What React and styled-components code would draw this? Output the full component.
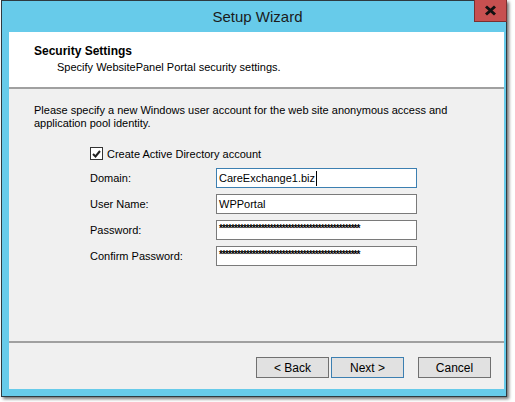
import React from "react";
import styled, { createGlobalStyle } from "styled-components";

const GlobalStyle = createGlobalStyle`
  html, body {
    margin: 0;
    padding: 0;
    background: #ffffff;
    font-family: "Liberation Sans", Arial, sans-serif;
  }
`;

const Screen = styled.div`
  width: 515px;
  height: 402px;
  overflow: hidden;
  padding-left: 1px;
  box-sizing: border-box;
`;

const Window = styled.div`
  width: 506px;
  height: 397px;
  box-sizing: border-box;
  border: 1px solid #2e3a40;
  background: #67cbea;
  box-shadow: 2px 2px 3px rgba(0, 0, 0, 0.55);
  display: flex;
  flex-direction: column;
  padding: 0 2px 7px 7px;
`;

const TitleBar = styled.div`
  height: 31px;
  flex-shrink: 0;
  display: flex;
  align-items: center;
  justify-content: center;
  position: relative;
  font-size: 15px;
  color: #1b1b1b;
  padding-left: 2px;
`;

const CloseButton = styled.div`
  position: absolute;
  top: -1px;
  right: -3px;
  width: 33px;
  height: 22px;
  box-sizing: border-box;
  background: #c75050;
  border: 1px solid #7a3030;
  border-top: none;
  display: flex;
  align-items: center;
  justify-content: center;
`;

const Client = styled.div`
  flex: 1;
  display: flex;
  flex-direction: column;
  background: #f0f0f0;
  font-size: 11px;
  color: #000;
`;

const Header = styled.div`
  height: 57px;
  flex-shrink: 0;
  background: #ffffff;
  box-sizing: border-box;
  padding: 12px 0 0 25px;
  border-bottom: 2px solid #a0a0a0;
`;

const HeaderTitle = styled.div`
  font-weight: bold;
  font-size: 12px;
  line-height: 14px;
`;

const HeaderSub = styled.div`
  padding-left: 23px;
  margin-top: 2px;
  font-size: 11px;
  line-height: 14px;
`;

const Body = styled.div`
  flex: 1;
  padding: 15px 20px 0 25px;
  border-bottom: 2px solid #a0a0a0;
`;

const Intro = styled.p`
  margin: 0;
  font-size: 11px;
  line-height: 13px;
`;

const Form = styled.div`
  margin: 17px 0 0 56px;
  display: grid;
  grid-template-columns: 126px 201px;
  row-gap: 6px;
  align-items: center;
`;

const CheckRow = styled.label`
  grid-column: 1 / span 2;
  display: flex;
  align-items: center;
  gap: 4px;
  font-size: 11px;
  height: 13px;
  margin-bottom: 2px;
`;

const CheckBox = styled.span`
  width: 13px;
  height: 13px;
  box-sizing: border-box;
  border: 1px solid #333;
  background: #fff;
  display: flex;
  align-items: center;
  justify-content: center;
`;

const Label = styled.span`
  font-size: 11px;
`;

const Field = styled.div`
  height: 20px;
  box-sizing: border-box;
  border: 1px solid ${({ $focused }) => ($focused ? "#3c7fb1" : "#7a7a7a")};
  background: #fff;
  display: flex;
  align-items: center;
  padding-left: 2px;
  font-size: 11px;
  color: #000;
  overflow: hidden;
  white-space: nowrap;
`;

const Caret = styled.span`
  display: inline-block;
  width: 1px;
  height: 15px;
  background: #000;
  margin-left: 1px;
`;

const Stars = styled.span`
  font-size: 10px;
  font-weight: bold;
  letter-spacing: -0.9px;
  line-height: 1;
  margin-top: -3px;
`;

const Footer = styled.div`
  height: 46px;
  flex-shrink: 0;
  display: flex;
  justify-content: flex-end;
  align-items: flex-start;
  padding: 14px 13px 0 0;
  box-sizing: border-box;
`;

const Button = styled.div`
  width: 73px;
  height: 21px;
  box-sizing: border-box;
  border: 1px solid ${({ $default }) => ($default ? "#3c7fb1" : "#707070")};
  background: #e1e1e1;
  display: flex;
  align-items: center;
  justify-content: center;
  font-size: 12px;
  margin-left: ${({ $gap }) => $gap}px;
`;

const stars = "*".repeat(47);

export default function App() {
  return (
    <>
      <GlobalStyle />
      <Screen>
        <Window>
          <TitleBar>
            Setup Wizard
            <CloseButton>
              <svg width="13" height="11" viewBox="0 0 13 11">
                <path d="M2 1.5 L11 9.5 M11 1.5 L2 9.5" stroke="#111" strokeWidth="3" />
              </svg>
            </CloseButton>
          </TitleBar>
          <Client>
            <Header>
              <HeaderTitle>Security Settings</HeaderTitle>
              <HeaderSub>Specify WebsitePanel Portal security settings.</HeaderSub>
            </Header>
            <Body>
              <Intro>
                Please specify a new Windows user account for the web site anonymous access and
                <br />
                application pool identity.
              </Intro>
              <Form>
                <CheckRow>
                  <CheckBox>
                    <svg width="9" height="8" viewBox="0 0 9 8">
                      <path d="M1 4 L3.5 6.5 L8 1" stroke="#222" strokeWidth="2" fill="none" />
                    </svg>
                  </CheckBox>
                  Create Active Directory account
                </CheckRow>
                <Label>Domain:</Label>
                <Field $focused>
                  CareExchange1.biz
                  <Caret />
                </Field>
                <Label>User Name:</Label>
                <Field>WPPortal</Field>
                <Label>Password:</Label>
                <Field>
                  <Stars>{stars}</Stars>
                </Field>
                <Label>Confirm Password:</Label>
                <Field>
                  <Stars>{stars}</Stars>
                </Field>
              </Form>
            </Body>
            <Footer>
              <Button>&lt; Back</Button>
              <Button $default $gap={2}>Next &gt;</Button>
              <Button $gap={14}>Cancel</Button>
            </Footer>
          </Client>
        </Window>
      </Screen>
    </>
  );
}
